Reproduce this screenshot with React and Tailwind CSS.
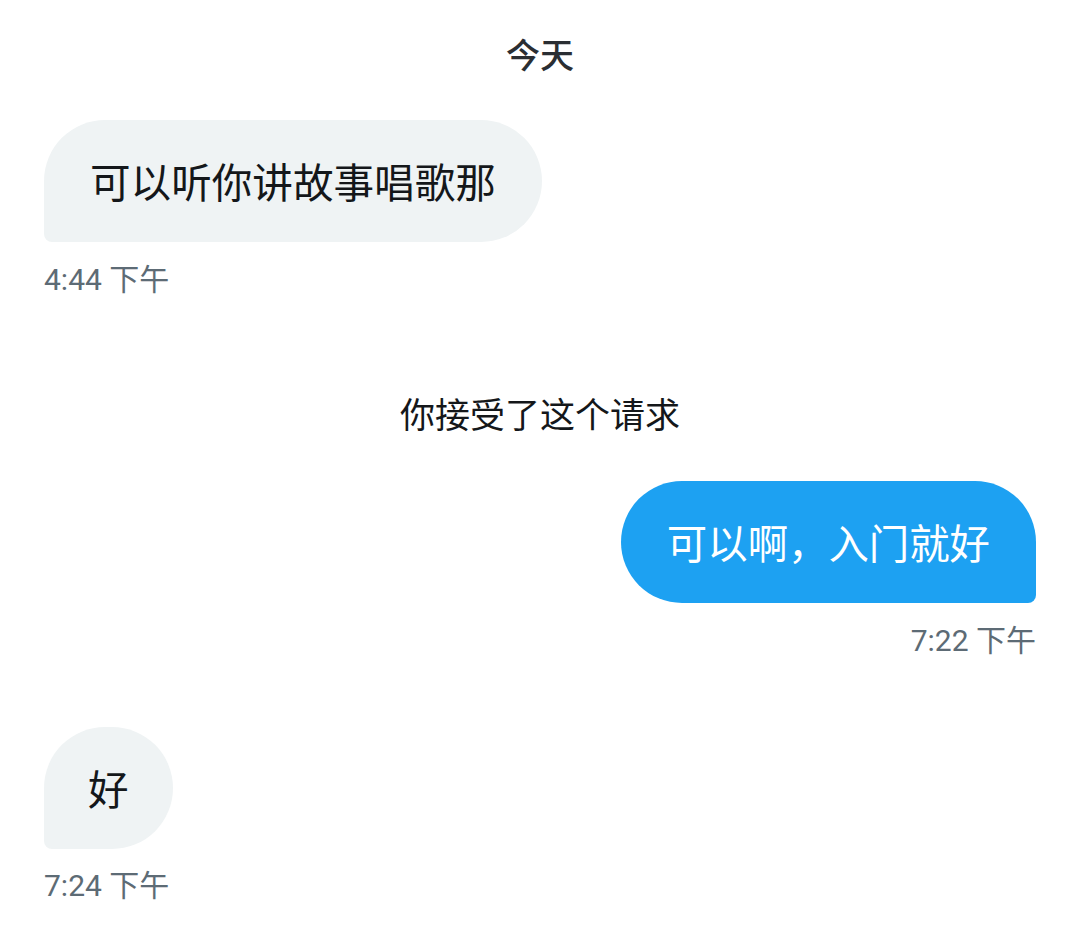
function Stamp({ children, right }) {
  return (
    <div className={`text-[30px] leading-[36px] text-[#5d6b75] ${right ? 'text-right' : ''}`}>
      {children}
    </div>
  );
}

export default function App() {
  return (
    <div
      className="w-[1080px] h-[940px] bg-white px-[44px] overflow-hidden"
      style={{ fontFamily: 'Roboto, "Noto Sans CJK SC", sans-serif' }}
    >
      <div className="pt-[36px] text-center text-[34px] leading-[40px] font-medium text-[#2a2e33]">今天</div>

      <div className="mt-[44px] flex">
        <div
          className="h-[122px] flex items-center px-[46px] bg-[#eff3f4] rounded-[61px] rounded-bl-[8px] text-[40.6px] text-[#14171a]"
          style={{ fontFamily: '"Noto Sans CJK SC", sans-serif' }}
        >
          可以听你讲故事唱歌那
        </div>
      </div>
      <div className="mt-[20px]">
        <Stamp>4:44 下午</Stamp>
      </div>

      <div className="mt-[99px] text-center text-[35px] leading-[40px] text-[#14171a]">你接受了这个请求</div>

      <div className="mt-[44px] flex justify-end">
        <div
          className="h-[122px] flex items-center px-[46px] bg-[#1da1f2] rounded-[61px] rounded-br-[8px] text-[40.4px] text-white"
          style={{ fontFamily: '"Noto Sans CJK SC", sans-serif' }}
        >
          可以啊，入门就好
        </div>
      </div>
      <div className="mt-[20px]">
        <Stamp right>7:22 下午</Stamp>
      </div>

      <div className="mt-[68px] flex">
        <div
          className="h-[122px] flex items-center px-[44px] bg-[#eff3f4] rounded-[61px] rounded-bl-[8px] text-[40.6px] text-[#14171a]"
          style={{ fontFamily: '"Noto Sans CJK SC", sans-serif' }}
        >
          好
        </div>
      </div>
      <div className="mt-[19px]">
        <Stamp>7:24 下午</Stamp>
      </div>
    </div>
  );
}
